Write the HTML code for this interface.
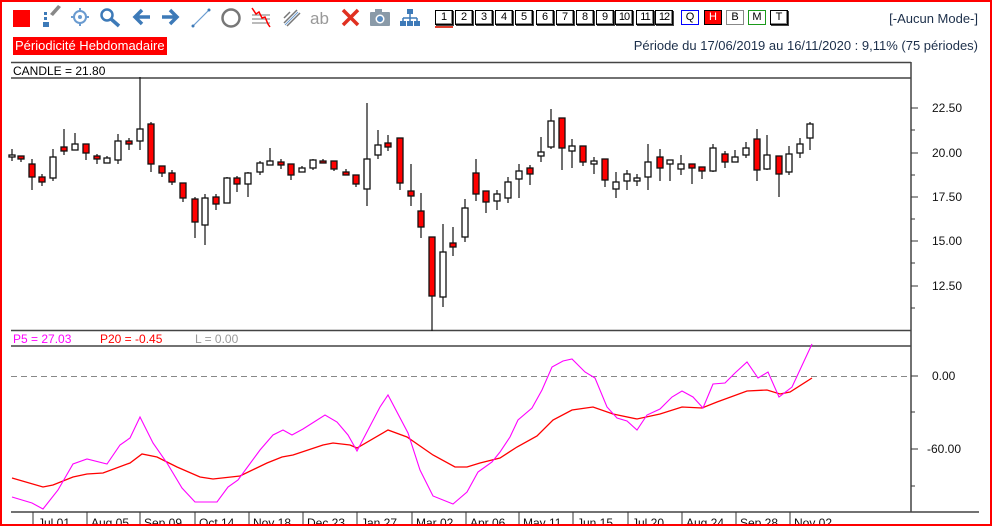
<!DOCTYPE html>
<html><head><meta charset="utf-8"><style>
html,body{margin:0;padding:0;background:#fff;}
body{width:992px;height:526px;position:relative;overflow:hidden;font-family:"Liberation Sans",Arial,sans-serif;}
.frame{position:absolute;left:0;top:0;width:988px;height:522px;border:2px solid #f00;z-index:5;pointer-events:none;}
.t{position:absolute;white-space:nowrap;}
.box{position:absolute;top:10px;width:16px;height:13px;border:1px solid #000;box-shadow:inset -1px -1px 0 #888,1px 1px 0 #444;font-size:11px;line-height:13px;text-align:center;color:#000;background:#fff;}
</style></head><body>
<div class="frame"></div>

<!-- toolbar icons -->
<svg class="t" style="left:0;top:0" width="430" height="32" viewBox="0 0 430 32">
 <rect x="13" y="10" width="17" height="17" fill="#f00"/>
 <!-- pencil/dots -->
 <rect x="44" y="12" width="3" height="3" fill="#3d7ab8"/><rect x="44" y="17" width="3" height="3" fill="#3d7ab8"/><rect x="43" y="22" width="6" height="5" fill="#3d7ab8"/>
 <path d="M50 14 L58 5 L61 7 L53 16 Z" fill="#888"/>
 <!-- crosshair -->
 <circle cx="80" cy="17" r="6" fill="none" stroke="#6a9bd0" stroke-width="2"/><circle cx="80" cy="17" r="2" fill="#6a9bd0"/>
 <path d="M80 8V11M80 23V26M71 17H74M86 17H89" stroke="#6a9bd0" stroke-width="2"/>
 <!-- magnifier -->
 <circle cx="107" cy="15" r="5.5" fill="none" stroke="#3d7ab8" stroke-width="2.5"/><path d="M111 19L119 26" stroke="#3d7ab8" stroke-width="3.5"/>
 <!-- arrows -->
 <path d="M150 17H135M142 10L135 17L142 24" fill="none" stroke="#3d7ab8" stroke-width="3.5"/>
 <path d="M162 17H177M170 10L177 17L170 24" fill="none" stroke="#3d7ab8" stroke-width="3.5"/>
 <!-- line -->
 <path d="M193 26L209 10" stroke="#6a9bd0" stroke-width="1.2"/><circle cx="193" cy="26" r="1.5" fill="#3d7ab8"/><circle cx="209" cy="10" r="1.5" fill="#3d7ab8"/>
 <!-- circle -->
 <circle cx="231" cy="18" r="8.5" fill="none" stroke="#777" stroke-width="2.5"/>
 <!-- zigzag -->
 <path d="M252 15H270M252 19H270M252 23H270" stroke="#777" stroke-width="1"/>
 <path d="M252 8L256 14L259 12L262 18L265 17L268 24L270 27" fill="none" stroke="#f00" stroke-width="1.5"/>
 <!-- parallel -->
 <path d="M284 23L297 10M287 26L300 13M284 18L290 12" stroke="#777" stroke-width="1.5"/><path d="M285 25L298 12" stroke="#6a9bd0" stroke-width="1"/>
 <text x="310" y="24" font-size="17" fill="#999" font-family="Liberation Sans, sans-serif">ab</text>
 <path d="M343 10L358 25M358 10L343 25" stroke="#e03020" stroke-width="3.5"/>
 <!-- camera -->
 <rect x="370" y="12" width="20" height="14" rx="1" fill="#8a9aa8"/><rect x="375" y="9" width="7" height="4" fill="#8a9aa8"/><circle cx="380" cy="19" r="4.5" fill="#fff"/><circle cx="380" cy="19" r="3" fill="#5a8cc0"/>
 <!-- tree -->
 <rect x="407" y="9" width="6" height="5" fill="#3d7ab8"/><path d="M410 14V18M403 18H417M403 18V21M410 18V21M417 18V21" stroke="#3d7ab8" stroke-width="1.5"/>
 <rect x="400" y="21" width="6" height="5" fill="#3d7ab8"/><rect x="407" y="21" width="6" height="5" fill="#3d7ab8"/><rect x="414" y="21" width="6" height="5" fill="#3d7ab8"/>
</svg>

<div class="box" style="left:435px">1</div>
<div class="t" style="left:435px;top:26px;width:18px;height:2px;background:#e04030"></div>
<div class="box" style="left:455px">2</div>
<div class="box" style="left:475px">3</div>
<div class="box" style="left:495px">4</div>
<div class="box" style="left:515px">5</div>
<div class="box" style="left:536px">6</div>
<div class="box" style="left:556px">7</div>
<div class="box" style="left:576px">8</div>
<div class="box" style="left:596px">9</div>
<div class="box" style="left:615px;letter-spacing:-1px">10</div>
<div class="box" style="left:636px;letter-spacing:-1px">11</div>
<div class="box" style="left:655px;letter-spacing:-1px">12</div>
<div class="box" style="left:681px;border-color:#00f;box-shadow:none;border-width:1px">Q</div>
<div class="box" style="left:704px;background:#f00;color:#fff;box-shadow:none">H</div>
<div class="box" style="left:726px;border-color:#888;box-shadow:none">B</div>
<div class="box" style="left:748px;border-color:#1a9a1a;box-shadow:none">M</div>
<div class="box" style="left:770px">T</div>

<div class="t" style="right:14px;top:11px;font-size:13px;color:#1c2f4a">[-Aucun Mode-]</div>
<div class="t" style="left:13px;top:37px;height:18px;padding:0 2px;background:#f00;color:#fff;font-size:13px;line-height:18px">Périodicité Hebdomadaire</div>
<div class="t" style="right:14px;top:38px;font-size:13px;color:#1c2f4a">Période du 17/06/2019 au 16/11/2020 : 9,11% (75 périodes)</div>
<div class="t" style="left:13px;top:64px;font-size:12px;color:#000">CANDLE = 21.80</div>
<div class="t" style="left:13px;top:332px;font-size:12px;color:#f0f">P5 = 27.03</div>
<div class="t" style="left:100px;top:332px;font-size:12px;color:#f00">P20 = -0.45</div>
<div class="t" style="left:195px;top:332px;font-size:12px;color:#999">L = 0.00</div>

<svg class="t" style="left:0;top:0" width="992" height="526" viewBox="0 0 992 526" font-family="Liberation Sans, sans-serif">
 <g stroke="#444" stroke-width="1.5" fill="none">
  <path d="M11 62.5H911M11 78H911M11 330.5H911M11 346H911M11 512H979M911 62V512"/>
 </g>
 <path d="M911 108H918M911 130H915M911 153H918M911 175H915M911 197H918M911 219H915M911 241H918M911 263H915M911 286H918M911 308H915M911 376H918M911 412H915M911 449H918M911 486H915" stroke="#333" stroke-width="1"/>
 <g font-size="12" fill="#111">
  <text x="932" y="112">22.50</text><text x="932" y="157">20.00</text><text x="932" y="201">17.50</text><text x="932" y="245">15.00</text><text x="932" y="290">12.50</text>
  <text x="932" y="380">0.00</text><text x="927" y="453">-60.00</text>
 </g>
 <!-- dates -->
 <path d="M33 512V526M87 512V526M140 512V526M195 512V526M249 512V526M303 512V526M357 512V526M412 512V526M466 512V526M519 512V526M573 512V526M628 512V526M682 512V526M736 512V526M790 512V526" stroke="#333" stroke-width="1"/>
 <g font-size="12" fill="#111">
  <text x="38" y="527">Jul 01</text><text x="91" y="527">Aug 05</text><text x="144" y="527">Sep 09</text><text x="199" y="527">Oct 14</text><text x="253" y="527">Nov 18</text><text x="307" y="527">Dec 23</text><text x="361" y="527">Jan 27</text><text x="416" y="527">Mar 02</text><text x="470" y="527">Apr 06</text><text x="523" y="527">May 11</text><text x="577" y="527">Jun 15</text><text x="632" y="527">Jul 20</text><text x="686" y="527">Aug 24</text><text x="740" y="527">Sep 28</text><text x="794" y="527">Nov 02</text>
 </g>
 <!-- wicks -->
 <path stroke="#111" stroke-width="1.2" d="M12 149V161M21 156V162M32 159V190M42 174V186M53 149V181M64 129V155M75 133V150M86 144V160M97 154V164M107 156V163M118 134V164M129 138V150M140 77V150M151 122V172M162 166V177M172 170V185M183 183V202M195 197V238M205 194V245M216 194V210M227 177V203M237 176V192M248 172V197M260 161V175M270 148V165M281 159V169M291 164V180M302 166V172M313 159V170M323 159V163M334 161V171M346 169V175M356 175V187M367 103V206M378 130V159M388 135V151M400 138V190M411 164V206M421 193V238M432 237V331M443 224V307M453 227V256M465 199V242M476 159V201M486 191V213M497 190V210M508 177V203M519 164V198M530 165V185M541 137V162M551 109V149M562 118V170M572 139V168M583 146V166M594 157V174M605 159V187M616 172V198M627 170V190M637 174V186M648 144V190M660 149V181M670 160V181M681 155V175M692 164V184M702 167V179M713 144V172M725 151V168M735 150V162M746 142V158M757 129V181M767 135V170M779 156V197M789 146V175M800 138V158M810 122V150"/>
 <g stroke="#111" stroke-width="1.3">
 <g fill="#fff">
  <rect x="9" y="155" width="6" height="2"/><rect x="50" y="157" width="6" height="21"/><rect x="72" y="144" width="6" height="6"/><rect x="104" y="158" width="6" height="5"/><rect x="115" y="141" width="6" height="19"/><rect x="137" y="129" width="6" height="12"/><rect x="202" y="198" width="6" height="27"/><rect x="224" y="178" width="6" height="25"/><rect x="245" y="173" width="6" height="11"/><rect x="257" y="163" width="6" height="9"/><rect x="267" y="161" width="6" height="4"/><rect x="299" y="168" width="6" height="4"/><rect x="310" y="160" width="6" height="8"/><rect x="364" y="159" width="6" height="30"/><rect x="375" y="145" width="6" height="10"/><rect x="440" y="252" width="6" height="45"/><rect x="462" y="208" width="6" height="29"/><rect x="494" y="194" width="6" height="7"/><rect x="505" y="182" width="6" height="16"/><rect x="516" y="171" width="6" height="8"/><rect x="538" y="152" width="6" height="4"/><rect x="548" y="121" width="6" height="26"/><rect x="569" y="146" width="6" height="5"/><rect x="591" y="161" width="6" height="3"/><rect x="613" y="182" width="6" height="7"/><rect x="624" y="174" width="6" height="7"/><rect x="634" y="178" width="6" height="3"/><rect x="645" y="162" width="6" height="15"/><rect x="667" y="160" width="6" height="4"/><rect x="678" y="164" width="6" height="5"/><rect x="710" y="148" width="6" height="23"/><rect x="732" y="157" width="6" height="5"/><rect x="743" y="148" width="6" height="7"/><rect x="764" y="155" width="6" height="14"/><rect x="786" y="154" width="6" height="18"/><rect x="797" y="144" width="6" height="9"/><rect x="807" y="124" width="6" height="14"/>
 </g>
 <g fill="#f00">
  <rect x="18" y="156" width="6" height="3"/><rect x="29" y="164" width="6" height="13"/><rect x="39" y="177" width="6" height="5"/><rect x="61" y="147" width="6" height="4"/><rect x="83" y="144" width="6" height="9"/><rect x="94" y="156" width="6" height="3"/><rect x="126" y="141" width="6" height="3"/><rect x="148" y="124" width="6" height="40"/><rect x="159" y="166" width="6" height="7"/><rect x="169" y="173" width="6" height="9"/><rect x="180" y="183" width="6" height="15"/><rect x="192" y="199" width="6" height="23"/><rect x="213" y="197" width="6" height="7"/><rect x="234" y="178" width="6" height="6"/><rect x="278" y="162" width="6" height="3"/><rect x="288" y="164" width="6" height="11"/><rect x="320" y="161" width="6" height="2"/><rect x="331" y="161" width="6" height="8"/><rect x="343" y="172" width="6" height="3"/><rect x="353" y="175" width="6" height="9"/><rect x="385" y="143" width="6" height="4"/><rect x="397" y="138" width="6" height="45"/><rect x="408" y="191" width="6" height="5"/><rect x="418" y="211" width="6" height="16"/><rect x="429" y="237" width="6" height="59"/><rect x="450" y="243" width="6" height="4"/><rect x="473" y="173" width="6" height="21"/><rect x="483" y="191" width="6" height="11"/><rect x="527" y="168" width="6" height="6"/><rect x="559" y="118" width="6" height="30"/><rect x="580" y="146" width="6" height="16"/><rect x="602" y="159" width="6" height="21"/><rect x="657" y="157" width="6" height="11"/><rect x="689" y="164" width="6" height="4"/><rect x="699" y="167" width="6" height="4"/><rect x="722" y="154" width="6" height="8"/><rect x="754" y="139" width="6" height="31"/><rect x="776" y="156" width="6" height="18"/>
 </g>
 </g>
 <!-- indicator -->
 <path d="M11 376.5H911" stroke="#888" stroke-width="1" stroke-dasharray="6,4"/>
 <polyline fill="none" stroke="#f00" stroke-width="1.3" points="12,478 43,487 53,485 73,477 87,474 103,473 130,463 142,454 157,457 177,467 200,477 213,479 240,476 267,463 282,457 293,455 323,445 333,443 350,445 357,448 388,430 407,437 433,455 455,467 467,467 480,463 500,458 517,447 537,436 553,420 572,410 593,407 613,414 637,419 660,414 682,407 702,408 717,402 747,391 767,390 780,394 790,392 812,378"/>
 <polyline fill="none" stroke="#f0f" stroke-width="1.1" points="12,497 32,503 43,509 58,490 73,464 87,459 107,464 120,445 130,438 140,417 153,443 167,463 182,488 195,502 217,502 228,487 238,480 260,450 273,435 283,430 292,435 303,429 325,415 337,422 348,435 357,451 380,407 388,395 408,433 420,470 433,496 453,504 467,492 478,472 492,462 500,452 510,437 518,420 532,408 542,390 552,367 563,361 572,359 585,372 595,378 607,407 617,418 627,421 637,430 647,415 660,409 672,397 682,391 693,397 703,408 713,384 725,383 735,373 747,362 758,378 768,372 779,397 792,387 812,344"/>
</svg>
</body></html>
